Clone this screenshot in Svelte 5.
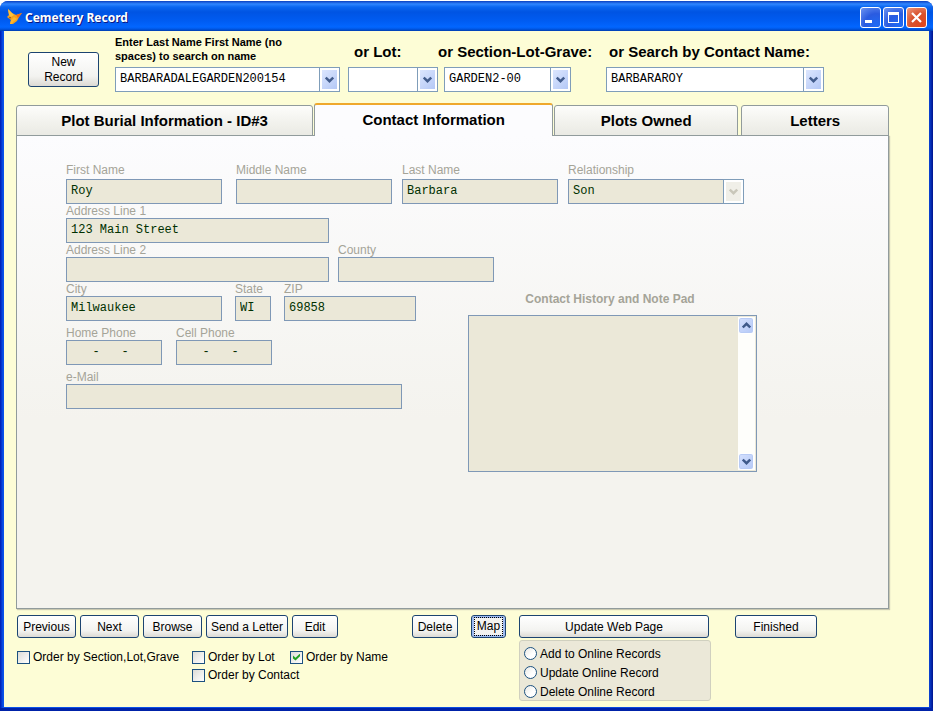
<script>
  const tabs = [
    { title: 'Plot Burial Information - ID#3', grow: 298 },
    { title: 'Contact Information', grow: 239 },
    { title: 'Plots Owned', grow: 184 },
    { title: 'Letters', grow: 147 }
  ];
  let active = $state(1);
  const orders = [
    { label: 'Order by Section,Lot,Grave', on: false },
    { label: 'Order by Lot', on: false },
    { label: 'Order by Name', on: true },
    { label: 'Order by Contact', on: false }
  ];
  const online = ['Add to Online Records', 'Update Online Record', 'Delete Online Record'];
</script>

{#snippet chevron(up)}
  <svg viewBox="0 0 9 7" width="9" height="7" aria-hidden="true">
    <path d={up ? 'M0.8 5.5 L4.5 1.8 L8.2 5.5' : 'M0.8 1.5 L4.5 5.2 L8.2 1.5'} fill="none" stroke="currentColor" stroke-width="2.4" />
  </svg>
{/snippet}

{#snippet combo(id, value, size, disabled)}
  <div class="combo {size}" class:disabled>
    <select {id} {disabled}><option>{value}</option></select>
    <span class="drop"><span class="face">{@render chevron(false)}</span></span>
  </div>
{/snippet}

{#snippet field(id, label, value, size)}
  <div class="field {size}">
    <label for={id}>{label}</label>
    <input {id} type="text" {value} readonly />
  </div>
{/snippet}

<div class="window">
  <header class="titlebar">
    <svg class="fox" viewBox="0 0 16 17" width="16" height="17" aria-hidden="true">
      <path d="M1 0 L5 4 L9 6 L15 4 L12 8 L10 12 L6 15 L3 15 L4 11 L0 8 L2 6 Z" fill="#f5a21c" />
      <path d="M1 0 L5 4 L7 6 L4 8 L2 6 Z" fill="#ffc23c" />
      <path d="M9 6 L15 4 L11 9 Z" fill="#f36b16" />
      <path d="M4 11 L7 8 L10 10 L6 13 L5 15 L3 15 Z" fill="#ffb52e" />
      <path d="M2 8 L4 8 L3 10 Z" fill="#9c4c10" />
    </svg>
    <h1>Cemetery Record</h1>
    <div class="controls">
      <button aria-label="Minimize"><svg viewBox="0 0 19 19"><path d="M4 12h7v3H4z" fill="#fff" /></svg></button>
      <button aria-label="Maximize"><svg viewBox="0 0 19 19"><path d="M4 4h11v11H4zM5 7v7h9V7z" fill="#fff" fill-rule="evenodd" /></svg></button>
      <button class="close" aria-label="Close"><svg viewBox="0 0 19 19"><path d="M5 5l9 9M14 5l-9 9" stroke="#fff" stroke-width="2.2" /></svg></button>
    </div>
  </header>

  <main>
    <section class="search">
      <button class="btn new">New<br />Record</button>
      <div class="lookup name">
        <label class="small" for="by-name">Enter Last Name First Name (no<br />spaces) to search on name</label>
        {@render combo('by-name', 'BARBARADALEGARDEN200154', 'w225', false)}
      </div>
      <div class="lookup lot">
        <label for="by-lot">or Lot:</label>
        {@render combo('by-lot', '', 'w90', false)}
      </div>
      <div class="lookup grave">
        <label for="by-grave">or Section-Lot-Grave:</label>
        {@render combo('by-grave', 'GARDEN2-00', 'w127', false)}
      </div>
      <div class="lookup contact">
        <label for="by-contact">or Search by Contact Name:</label>
        {@render combo('by-contact', 'BARBARAROY', 'w218', false)}
      </div>
    </section>

    <div class="tabs" role="tablist">
      {#each tabs as tab, i}
        <button role="tab" class="tab" class:active={active === i} aria-selected={active === i}
          style="flex-grow: {tab.grow}" onclick={() => (active = i)}>{tab.title}</button>
      {/each}
    </div>

    <section class="panel">
      <div class="row first">
        {@render field('first', 'First Name', 'Roy', 'w156')}
        {@render field('middle', 'Middle Name', '', 'w156')}
        {@render field('last', 'Last Name', 'Barbara', 'w156')}
        <div class="field w176">
          <label for="relation">Relationship</label>
          {@render combo('relation', 'Son', 'w176', true)}
        </div>
      </div>
      <div class="row">{@render field('addr1', 'Address Line 1', '123 Main Street', 'w263')}</div>
      <div class="row">
        {@render field('addr2', 'Address Line 2', '', 'w263')}
        {@render field('county', 'County', '', 'w156')}
      </div>
      <div class="split">
        <div class="left">
          <div class="row city">
            {@render field('city', 'City', 'Milwaukee', 'w156')}
            {@render field('state', 'State', 'WI', 'w36')}
            {@render field('zip', 'ZIP', '69858', 'w132')}
          </div>
          <div class="row phones">
            {@render field('home', 'Home Phone', '   -   -', 'w96')}
            {@render field('cell', 'Cell Phone', '   -   -', 'w96')}
          </div>
          <div class="row">{@render field('email', 'e-Mail', '', 'w336')}</div>
        </div>
        <div class="notes">
          <label for="notes">Contact History and Note Pad</label>
          <div class="pad">
            <textarea id="notes" readonly></textarea>
            <div class="scroll">
              <button aria-label="Scroll up">{@render chevron(true)}</button>
              <button aria-label="Scroll down">{@render chevron(false)}</button>
            </div>
          </div>
        </div>
      </div>
    </section>

    <footer>
      <div class="actions">
        <div class="bar">
          <div class="group">
            <button class="btn w59">Previous</button>
            <button class="btn w59">Next</button>
            <button class="btn w59">Browse</button>
            <button class="btn w82">Send a Letter</button>
            <button class="btn w46">Edit</button>
          </div>
          <div class="group wide">
            <button class="btn w46">Delete</button>
            <button class="btn map"><span>Map</span></button>
          </div>
        </div>
        <div class="orders">
          {#each orders as order}
            <label><input type="checkbox" checked={order.on} />{order.label}</label>
          {/each}
        </div>
      </div>
      <div class="web">
        <button class="btn update">Update Web Page</button>
        <div class="online" role="radiogroup" aria-label="Update Web Page">
          {#each online as item}
            <label><input type="radio" name="online" />{item}</label>
          {/each}
        </div>
      </div>
      <button class="btn w82">Finished</button>
    </footer>
  </main>
</div>

<style>
  :global(body) { background: #fff; }
  :global(#app) { padding: 1px 2px 2px 0; }
  * { box-sizing: border-box; }
  button, input, select, textarea { margin: 0; font: inherit; color: inherit; border-radius: 0; outline: 0; }
  svg { display: block; }

  .window {
    font: 12px/14px "Liberation Sans", Arial, sans-serif;
    color: #000;
    background: linear-gradient(90deg, #001bb0 0, #0a52ea 3px, #0a45d8 calc(100% - 4px), #00138c 100%);
    border-radius: 8px 8px 0 0;
    padding-bottom: 4px;
    box-shadow: inset 0 -3px #0022a8;
    min-width: 905px;
  }
  .titlebar {
    display: flex;
    align-items: center;
    gap: 2px;
    height: 30px;
    padding: 3px 6px 0 7px;
    border-radius: 8px 8px 0 0;
    background: linear-gradient(#0a3fc0 0, #2f86ff 3px, #0a66f0 6px, #0054e3 11px, #005cf2 20px, #0266ff 26px, #0058e6 28px, #003dae 30px);
  }
  h1 {
    flex: 1;
    margin: 0;
    font: bold 12px/16px "Noto Sans", "Open Sans", sans-serif;
    color: #fff;
    text-shadow: 1px 1px #0a1883;
  }
  .controls { display: flex; gap: 2px; }
  .controls button {
    width: 21px;
    height: 21px;
    padding: 0;
    border: 1px solid #fff;
    border-radius: 3px;
    background: radial-gradient(circle at 80% 90%, #1f6bf5, #2a5be0 50%, #6d94f0 100%);
  }
  .controls .close { background: radial-gradient(circle at 80% 90%, #e0461c, #d8512c 50%, #ee9a80 100%); }

  main { margin: 0 4px; background: #fdfdd6; padding-bottom: 6px; }

  .search { display: flex; align-items: flex-end; padding: 4px 0 11px 24px; }
  .lookup > label { display: block; font-weight: bold; font-size: 15px; line-height: 18px; padding-bottom: 6px; white-space: nowrap; }
  .lookup > .small { font-size: 11px; line-height: 14px; padding-bottom: 4px; }
  .name { margin-left: 16px; }
  .lot { margin-left: 8px; }
  .lot > label { padding-left: 6px; }
  .grave { width: 168px; }
  .grave .combo { margin-left: 6px; }
  .contact > label { padding-left: 3px; }

  .btn {
    height: 23px;
    padding: 0;
    border: 1px solid #1c4471;
    border-radius: 3px;
    background: linear-gradient(#fff, #f3f3f0 70%, #dcdad4);
    white-space: nowrap;
  }
  .new { width: 71px; height: 35px; line-height: 15px; margin-bottom: 5px; }

  .combo { position: relative; height: 25px; }
  select, .field input {
    display: block;
    appearance: none;
    width: 100%;
    height: 25px;
    padding: 0 4px;
    border: 1px solid #7f9db9;
    background: #fff;
    font: 12px/15px "Liberation Mono", "Courier New", monospace;
    opacity: 1;
  }
  .field input { padding-bottom: 2px; }
  select { color: #000; }
  .field input, .disabled select {
    background: #ebe8d8;
    color: #003000;
    border-color: #7f98b6;
  }
  .drop {
    position: absolute;
    right: 0;
    top: 0;
    width: 21px;
    height: 25px;
    padding: 2px;
    border: 1px solid #7f9db9;
    background: #fff;
    pointer-events: none;
  }
  .face { display: flex; align-items: center; justify-content: center; height: 100%; background: linear-gradient(135deg, #dce6fe, #b4c8f6); color: #425c8c; }
  .disabled .face { background: #f0efe8; color: #c9c7ba; }

  .tabs { display: flex; align-items: flex-end; gap: 1px; height: 32px; padding: 0 40px 0 12px; }
  .tab {
    flex: 1 1 0;
    height: 31px;
    margin-bottom: -1px;
    padding: 0;
    border: 1px solid #919b9c;
    border-radius: 3px 3px 0 0;
    background: linear-gradient(#fdfdfb, #f1f1ec 60%, #eaeae4);
    font-weight: bold;
    font-size: 15px;
    line-height: 18px;
  }
  .tab:last-child { margin-left: 2px; }
  .tab.active {
    position: relative;
    height: 33px;
    border-top: 2px solid #efa82c;
    border-bottom: 0;
    background: #fcfcfe;
    padding-bottom: 2px;
  }

  .panel {
    min-height: 474px;
    margin: 0 40px 0 12px;
    padding: 27px 49px 20px;
    border: 1px solid #919b9c;
    box-shadow: 1px 1px 1px #c9c8b0;
    background: linear-gradient(#fcfcfe, #f4f3ee 60%);
  }
  .row { display: flex; gap: 9px; }
  .first { gap: 10px; }
  .first .field:first-child { margin-right: 4px; }
  .first label { padding-bottom: 2px; }
  .city { gap: 13px; }
  .phones { gap: 14px; margin: 5px 0; }
  .field label { display: block; color: #a5a498; white-space: nowrap; }
  .split { display: flex; }
  .left { width: 402px; }
  .notes { width: 289px; padding-top: 10px; }
  .notes label { display: block; text-align: center; font-weight: bold; color: #a5a498; padding: 0 5px 9px 0; }
  .pad { display: flex; height: 157px; border: 1px solid #7f98b6; background: #ebe8d8; padding: 1px; }
  textarea { flex: 1; border: 0; padding: 3px; resize: none; background: none; font-family: "Liberation Mono", monospace; }
  .scroll { display: flex; flex-direction: column; justify-content: space-between; width: 17px; background: #fefefb; padding-right: 1px; }
  .scroll button {
    display: flex;
    align-items: center;
    justify-content: center;
    height: 17px;
    padding: 0;
    border: 1px solid #fff;
    border-radius: 3px;
    background: linear-gradient(135deg, #d5e1fe, #b4c8f6);
    box-shadow: inset 0 0 0 1px #b8cbf5;
    color: #3f5a8a;
  }

  footer { display: flex; align-items: flex-start; padding: 6px 13px 0; }
  .actions { width: 489px; margin-right: 13px; }
  .bar { display: flex; justify-content: space-between; }
  .group { display: flex; gap: 4px; }
  .wide { gap: 13px; }
  .map { width: 35px; padding: 1px; background: #f3f3f0; box-shadow: inset 0 0 0 2px #9dbaf0; }
  .map span { display: block; margin: 0 1px; border: 1px dotted #000; line-height: 17px; }
  .orders { display: grid; grid-template-columns: 175px 98px auto; margin-top: 10px; }
  .orders label:last-child { grid-column: 2 / 4; }
  .orders label, .online label { display: flex; align-items: center; gap: 3px; height: 18px; white-space: nowrap; }
  .orders input, .online input {
    appearance: none;
    flex: none;
    width: 13px;
    height: 13px;
    border: 1px solid #1c5180;
    background: linear-gradient(135deg, #dcdcd7, #fff);
  }
  .orders input:checked::before {
    content: "";
    display: block;
    width: 7px;
    height: 7px;
    margin: 2px;
    background: #21a121;
    clip-path: polygon(0 29%, 36% 62%, 100% 0, 100% 40%, 36% 100%, 0 70%);
  }
  .web { width: 192px; margin-right: 24px; }
  .update { display: block; width: 190px; }
  .online { margin-top: 2px; padding: 3px 4px 0; height: 61px; border: 1px solid #d0d0bf; border-radius: 3px; background: #ebe8d8; }
  .online label { height: 19px; }
  .online input { border-radius: 50%; background: linear-gradient(135deg, #e8e8e4, #fff 60%); }

  .w36 { width: 36px; }
  .w46 { width: 46px; }
  .w59 { width: 59px; }
  .w82 { width: 82px; }
  .w90 { width: 90px; }
  .w96 { width: 96px; }
  .w127 { width: 127px; }
  .w132 { width: 132px; }
  .w156 { width: 156px; }
  .w176 { width: 176px; }
  .w218 { width: 218px; }
  .w225 { width: 225px; }
  .w263 { width: 263px; }
  .w336 { width: 336px; }
</style>
